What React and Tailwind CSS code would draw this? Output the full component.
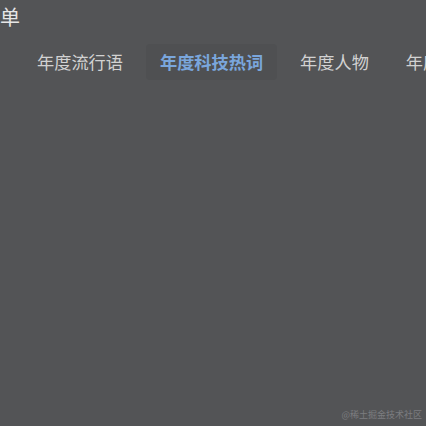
const tabs = ["年度流行语", "年度科技热词", "年度人物", "年度好书"];

const App = () => {
  const active = 1;

  return (
    <div
      className="relative h-[426px] w-[426px] overflow-hidden bg-[#535456]"
      style={{ fontFamily: '"Noto Sans CJK SC", "Noto Sans", sans-serif' }}
    >
      {/* Title, cut off at the left edge */}
      <div className="pt-[3px] text-[20px] leading-[28px] text-[#e6e6e6]">单</div>

      {/* Tab row */}
      <div className="mt-[13px] flex gap-[9px] whitespace-nowrap pl-[23px]">
        {tabs.map((tab, i) => (
          <div
            key={tab}
            className={
              i === active
                ? "flex h-[36px] shrink-0 items-center rounded-[4px] bg-[#4f5052] px-[14px] text-[17.2px] font-bold text-[#7aa6dc]"
                : "flex h-[36px] shrink-0 items-center rounded-[4px] px-[14px] text-[17.2px] text-[#d2d2d2]"
            }
          >
            {tab}
          </div>
        ))}
      </div>

      {/* Watermark */}
      <div className="absolute bottom-[5px] right-[4px] text-[9px] leading-[12px] text-[#7c7d80]">
        @稀土掘金技术社区
      </div>
    </div>
  );
};

export default App;
